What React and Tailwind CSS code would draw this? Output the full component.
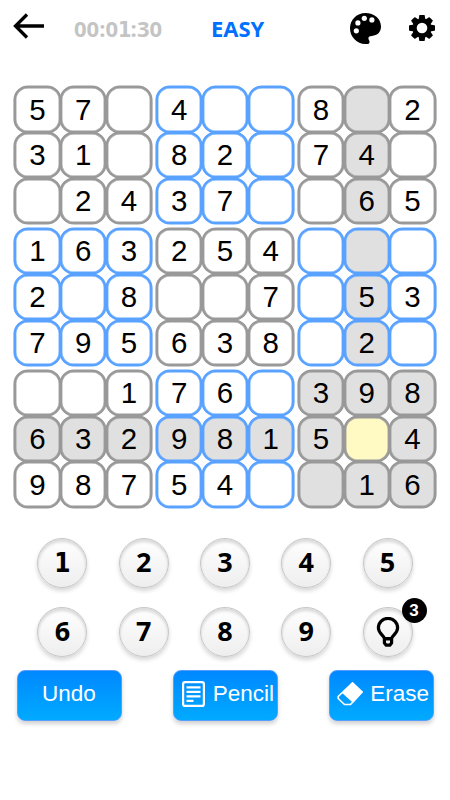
import React from 'react';

// 0 = empty cell
const board = [
  [5, 7, 0, 4, 0, 0, 8, 0, 2],
  [3, 1, 0, 8, 2, 0, 7, 4, 0],
  [0, 2, 4, 3, 7, 0, 0, 6, 5],
  [1, 6, 3, 2, 5, 4, 0, 0, 0],
  [2, 0, 8, 0, 0, 7, 0, 5, 3],
  [7, 9, 5, 6, 3, 8, 0, 2, 0],
  [0, 0, 1, 7, 6, 0, 3, 9, 8],
  [6, 3, 2, 9, 8, 1, 5, 0, 4],
  [9, 8, 7, 5, 4, 0, 0, 1, 6]
];

const selected = { row: 7, col: 7 };
const range = [0, 1, 2];

function isRelated(row, col) {
  const sameBlock =
    Math.floor(row / 3) === Math.floor(selected.row / 3) &&
    Math.floor(col / 3) === Math.floor(selected.col / 3);
  return row === selected.row || col === selected.col || sameBlock;
}

function Cell({ row, col, blue }) {
  let bg = 'bg-white';
  if (isRelated(row, col)) bg = 'bg-[#e0e0e0]';
  if (row === selected.row && col === selected.col) bg = 'bg-[#fff9c4]';

  return (
    <div
      className={`-m-[0.2px] flex items-center justify-center rounded-[14px] border-2 text-[29.500px] leading-none ${
        blue
          ? 'border-[#5aa2ff] shadow-[0_0_0_0.6px_#5aa2ff,inset_0_0_0_0.4px_#5aa2ff]'
          : 'border-[#999999] shadow-[0_0_0_0.6px_#999999,inset_0_0_0_0.4px_#999999]'
      } ${bg}`}
    >
      {board[row][col] || ''}
    </div>
  );
}

function Block({ blockRow, blockCol }) {
  const blue = (blockRow + blockCol) % 2 === 1;
  return (
    <div className="grid grid-cols-[repeat(3,45.75px)] grid-rows-[repeat(3,45.75px)]">
      {range.map(r =>
        range.map(c => (
          <Cell key={`${r}-${c}`} row={blockRow * 3 + r} col={blockCol * 3 + c} blue={blue} />
        ))
      )}
    </div>
  );
}

// The digit 1 is set in a face that has a foot serif
function One({ className }) {
  return (
    <span className={`inline-block text-center font-['DejaVu_Sans_Condensed','DejaVu_Sans',sans-serif] ${className}`}>1</span>
  );
}

function BackIcon() {
  return (
    <svg width="32" height="26" viewBox="0 0 32 26" fill="none" stroke="#000" strokeWidth="3.300">
      <path d="M14 1.500 2.500 13 14 24.500M2.500 13H31" />
    </svg>
  );
}

function PaletteIcon() {
  return (
    <svg width="31" height="31" viewBox="0 0 31 31">
      <path d="M15.500 0C6.800 0 0 6.800 0 15.300 0 24 7 31 15.200 31h1.800c1.700 0 2.500-.8 2.500-2.100 0-1.500-1.100-2.300-1.100-3.600 0-1.700 1.500-2.400 3.400-2.400C27.500 22.900 31 19 31 13.600 31 5.600 24 0 15.500 0z" />
      <g fill="#fff">
        <circle cx="6.300" cy="17.800" r="2.600" />
        <circle cx="7.900" cy="9.900" r="2.600" />
        <circle cx="14.300" cy="5.300" r="2.600" />
        <circle cx="21.900" cy="6.900" r="2.600" />
      </g>
    </svg>
  );
}

function GearIcon() {
  return (
    <svg width="26" height="26" viewBox="-13 -13 26 26">
      {[0, 45, 90, 135].map(angle => (
        <path
          key={angle}
          d="M-2.700-12.500Q-2.600-13-2-13H2Q2.600-13 2.700-12.500L3.500-8V8L2.700 12.500Q2.600 13 2 13H-2Q-2.600 13-2.700 12.500L-3.500 8V-8z"
          transform={`rotate(${angle})`}
        />
      ))}
      <circle r="9.500" />
      <circle r="5.300" fill="#fff" />
    </svg>
  );
}

function BulbIcon() {
  return (
    <svg className="mt-[2px]" width="24" height="30" viewBox="0 0 24 30" fill="none" stroke="#000" strokeWidth="3.200">
      <path d="M8.500 21.500C7.500 18.200 2.400 16 2.400 11a9.600 9.600 0 0 1 19.200 0c0 5-5.100 7.200-6.100 10.500z" />
      <path d="M8.400 22h7.200v4L13.800 28.200h-3.600l-1.800-2.200z" strokeLinejoin="round" />
    </svg>
  );
}

function NoteIcon() {
  return (
    <svg width="23" height="26" viewBox="0 0 23 26" fill="none" stroke="#fff" strokeWidth="2.200">
      <rect x="1.100" y="1.100" width="20.800" height="23.800" rx="2" />
      <path d="M4.500 6.300h14M4.500 10.800h14M4.500 15.300h14M4.500 19.800h7" />
    </svg>
  );
}

function EraserIcon() {
  return (
    <svg width="26" height="24" viewBox="0 0 26 24" fill="none" stroke="#fff" strokeWidth="1.700" strokeLinejoin="round">
      <path d="M15.500 1 25 10 13.500 22.500H7.500L1.200 16.500V14.500z" />
      <path d="M15.500 1 25 10 16 19.700 6 10.500z" fill="#fff" />
    </svg>
  );
}

function PadButton({ children }) {
  return (
    <div className="relative flex h-[50px] w-[50px] items-center justify-center rounded-full border border-[#c6c6c6] bg-linear-to-b from-white to-[#eeeeee] pb-[2px] font-['Open_Sans',sans-serif] text-[27px] leading-none font-bold shadow-[0_3px_4px_rgba(0,0,0,0.16),inset_0_3px_3px_rgba(0,0,0,0.14)]">
      {children}
    </div>
  );
}

function ActionButton({ children }) {
  return (
    <button className="flex h-[51px] w-[105px] items-center justify-center rounded-lg border border-[#559dff] bg-linear-to-b from-[#0088ff] to-[#00aaff] pb-[3px] text-[22.500px] whitespace-nowrap text-white shadow-[0_3px_4px_rgba(0,0,0,0.18)]">
      {children}
    </button>
  );
}

function App() {
  return (
    <div className="h-[800px] w-[450px] overflow-hidden bg-white font-['Liberation_Sans',Arial,sans-serif] text-black">
      {/* Header */}
      <div className="flex h-[86.600px] items-start pl-[12.500px]">
        <div className="mt-[12.500px] w-[61.500px]"><BackIcon /></div>
        <div className="mt-[13px] w-[137px] font-['Open_Sans',sans-serif] text-[22px] leading-[30px] font-bold text-[#c4c4c4]">
          00:0<One className="w-[12.600px] text-[21.500px]" />:30
        </div>
        <div className="mt-[13px] w-[139px] font-['Open_Sans',sans-serif] text-[22px] leading-[30px] font-bold text-[#0070ff]">
          EASY
        </div>
        <div className="mt-[12.500px] w-[59px]"><PaletteIcon /></div>
        <div className="mt-[15px]"><GearIcon /></div>
      </div>

      {/* Board */}
      <div className="ml-[14.600px] grid w-max grid-cols-3 gap-[4.500px]">
        {range.map(r => range.map(c => <Block key={`${r}-${c}`} blockRow={r} blockCol={c} />))}
      </div>

      {/* Number pad */}
      <div className="mt-[30.200px] ml-[37.400px] grid w-max grid-cols-[repeat(5,50px)] gap-x-[31.300px] gap-y-[19px]">
        {[1, 2, 3, 4, 5, 6, 7, 8, 9].map(n => (
          <PadButton key={n}>{n === 1 ? <One className="pt-[3px] text-[26px]" /> : n}</PadButton>
        ))}
        <PadButton>
          <BulbIcon />
          <span className="absolute -top-[10px] -right-[15px] flex h-[25px] w-[25px] items-center justify-center rounded-full bg-black font-['Liberation_Sans',Arial,sans-serif] text-[17px] text-white">
            3
          </span>
        </PadButton>
      </div>

      {/* Actions */}
      <div className="mt-[13px] ml-[16.500px] flex gap-[51.300px]">
        <ActionButton>Undo</ActionButton>
        <ActionButton>
          <span className="mr-[8px] ml-[5px]"><NoteIcon /></span>
          Pencil
        </ActionButton>
        <ActionButton>
          <span className="mr-[7px] ml-[3px]"><EraserIcon /></span>
          Erase
        </ActionButton>
      </div>
    </div>
  );
}

export default App;
